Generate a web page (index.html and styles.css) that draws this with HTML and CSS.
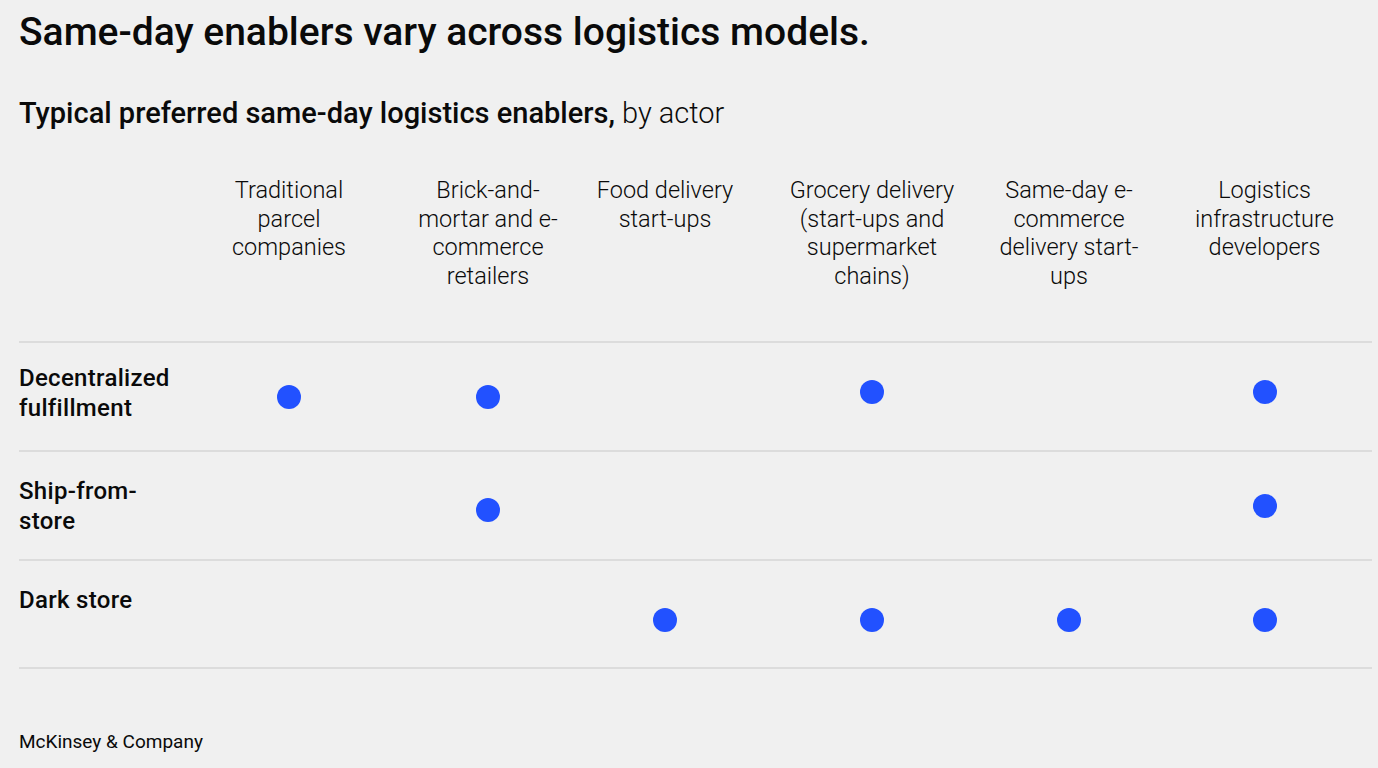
FILE: index.html
```html
<!DOCTYPE html>
<html lang="en">
<head>
<meta charset="utf-8">
<title>Same-day enablers</title>
<link rel="stylesheet" href="styles.css">
</head>
<body>
<main class="page">
  <h1 class="title">Same-day enablers vary across logistics models.</h1>
  <h2 class="subtitle"><strong>Typical preferred same-day logistics enablers,</strong> by actor</h2>

  <section class="chart">
    <div class="grid head">
      <div class="label"></div>
      <div class="col">Traditional<br>parcel<br>companies</div>
      <div class="col">Brick-and-<br>mortar and e-<br>commerce<br>retailers</div>
      <div class="col">Food delivery<br>start-ups</div>
      <div class="col">Grocery delivery<br>(start-ups and<br>supermarket<br>chains)</div>
      <div class="col">Same-day e-<br>commerce<br>delivery start-<br>ups</div>
      <div class="col">Logistics<br>infrastructure<br>developers</div>
    </div>

    <div class="grid row">
      <div class="label">Decentralized fulfillment</div>
      <div class="cell"><span class="dot"></span></div>
      <div class="cell"><span class="dot"></span></div>
      <div class="cell"></div>
      <div class="cell"><span class="dot dot--up"></span></div>
      <div class="cell"></div>
      <div class="cell"><span class="dot dot--up"></span></div>
    </div>

    <div class="grid row">
      <div class="label">Ship-from-store</div>
      <div class="cell"></div>
      <div class="cell"><span class="dot dot--down"></span></div>
      <div class="cell"></div>
      <div class="cell"></div>
      <div class="cell"></div>
      <div class="cell"><span class="dot"></span></div>
    </div>

    <div class="grid row row--last">
      <div class="label">Dark store</div>
      <div class="cell"></div>
      <div class="cell"></div>
      <div class="cell"><span class="dot dot--low"></span></div>
      <div class="cell"><span class="dot dot--low"></span></div>
      <div class="cell"><span class="dot dot--low"></span></div>
      <div class="cell"><span class="dot dot--low"></span></div>
    </div>
  </section>

  <footer class="source">McKinsey &amp; Company</footer>
</main>
</body>
</html>
```

FILE: styles.css
```css
* { box-sizing: border-box; }

html, body {
  margin: 0;
  padding: 0;
  background: #f0f0f0;
}

body {
  font-family: Roboto, "Liberation Sans", Arial, sans-serif;
  color: #0a0a0a;
  height: 768px;
  overflow: hidden;
}

.page {
  padding: 10px 6px 0 19px;
  width: 1378px;
}

.title {
  margin: 0;
  font-size: 39px;
  line-height: 44px;
  font-weight: 500;
  letter-spacing: 0;
}

.subtitle {
  margin: 42px 0 0;
  font-size: 29px;
  line-height: 34px;
  font-weight: 300;
}

.subtitle strong {
  font-weight: 500;
}

.chart {
  margin-top: 46px;
}

.grid {
  display: grid;
  grid-template-columns: 150px 240px 158px 196px 218px 176px 215px;
}

.head {
  padding-bottom: 51px;
}

.col {
  text-align: center;
  font-size: 23.5px;
  line-height: 28.5px;
  font-weight: 300;
}

.row {
  height: 109px;
  border-top: 2px solid #dcdcdc;
}

.row--last {
  height: 110px;
  border-bottom: 2px solid #dcdcdc;
}

.row .label {
  padding-top: 20px;
  font-size: 24px;
  line-height: 30px;
  font-weight: 500;
  letter-spacing: 0.3px;
}

.row + .row .label {
  padding-top: 24px;
}

.cell {
  display: flex;
  align-items: center;
  justify-content: center;
}

.dot {
  width: 24px;
  height: 24px;
  border-radius: 50%;
  background: #2251ff;
}

.dot--up { margin-bottom: 10px; }
.dot--down { margin-top: 8px; }
.dot--low { margin-top: 12px; }

.source {
  margin-top: 61px;
  font-size: 19px;
  line-height: 24px;
  font-weight: 400;
}
```
